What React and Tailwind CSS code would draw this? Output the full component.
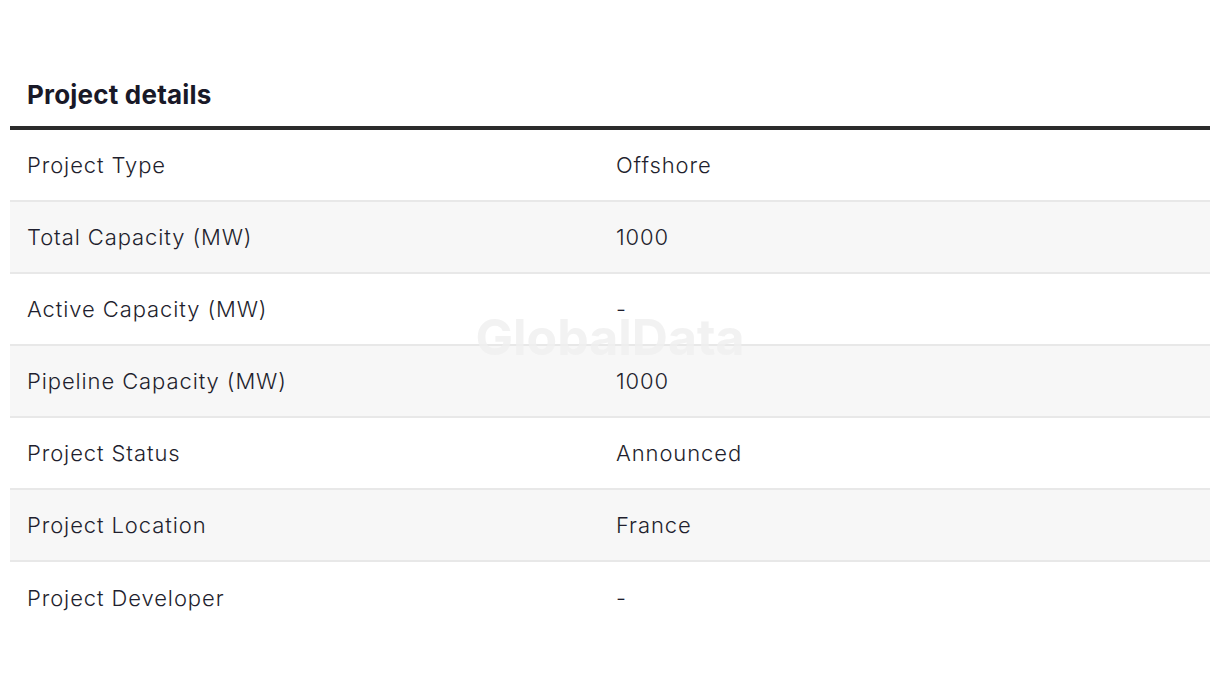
import React from "react";

const rows = [
  { label: "Project Type", value: "Offshore" },
  { label: "Total Capacity (MW)", value: "1000" },
  { label: "Active Capacity (MW)", value: "-" },
  { label: "Pipeline Capacity (MW)", value: "1000" },
  { label: "Project Status", value: "Announced" },
  { label: "Project Location", value: "France" },
  { label: "Project Developer", value: "-" },
];

export default function App() {
  return (
    <div className="min-h-screen bg-white px-[10px] pt-[76px] text-[#1f1f2e]" style={{ fontFamily: "Inter, 'Noto Sans', sans-serif" }}>
      <h2 className="pl-[17px] text-[26px] font-bold leading-[38px] tracking-[0.2px] text-[#191928]">Project details</h2>
      <div className="relative mt-[12px] border-t-4 border-[#2b2b2b]">
        {/* watermark */}
        <div className="pointer-events-none absolute left-0 right-0 top-[182px] flex justify-center">
          <span className="select-none text-[50px] font-bold leading-none text-[#f0f0f0] opacity-80">GlobalData</span>
        </div>
        {rows.map((row, i) => (
          <div
            key={row.label}
            className={`grid h-[72px] grid-cols-[590px_1fr] items-center ${i % 2 === 1 ? "bg-[#f7f7f7]" : "bg-white/0"} ${i < rows.length - 1 ? "border-b-2 border-[#e8e8e8]" : ""}`}
          >
            <div className="pl-[17px] text-[22px] font-light tracking-[0.9px]">{row.label}</div>
            <div className="pl-[16px] text-[22px] font-light tracking-[0.9px]">{row.value}</div>
          </div>
        ))}
      </div>
    </div>
  );
}
